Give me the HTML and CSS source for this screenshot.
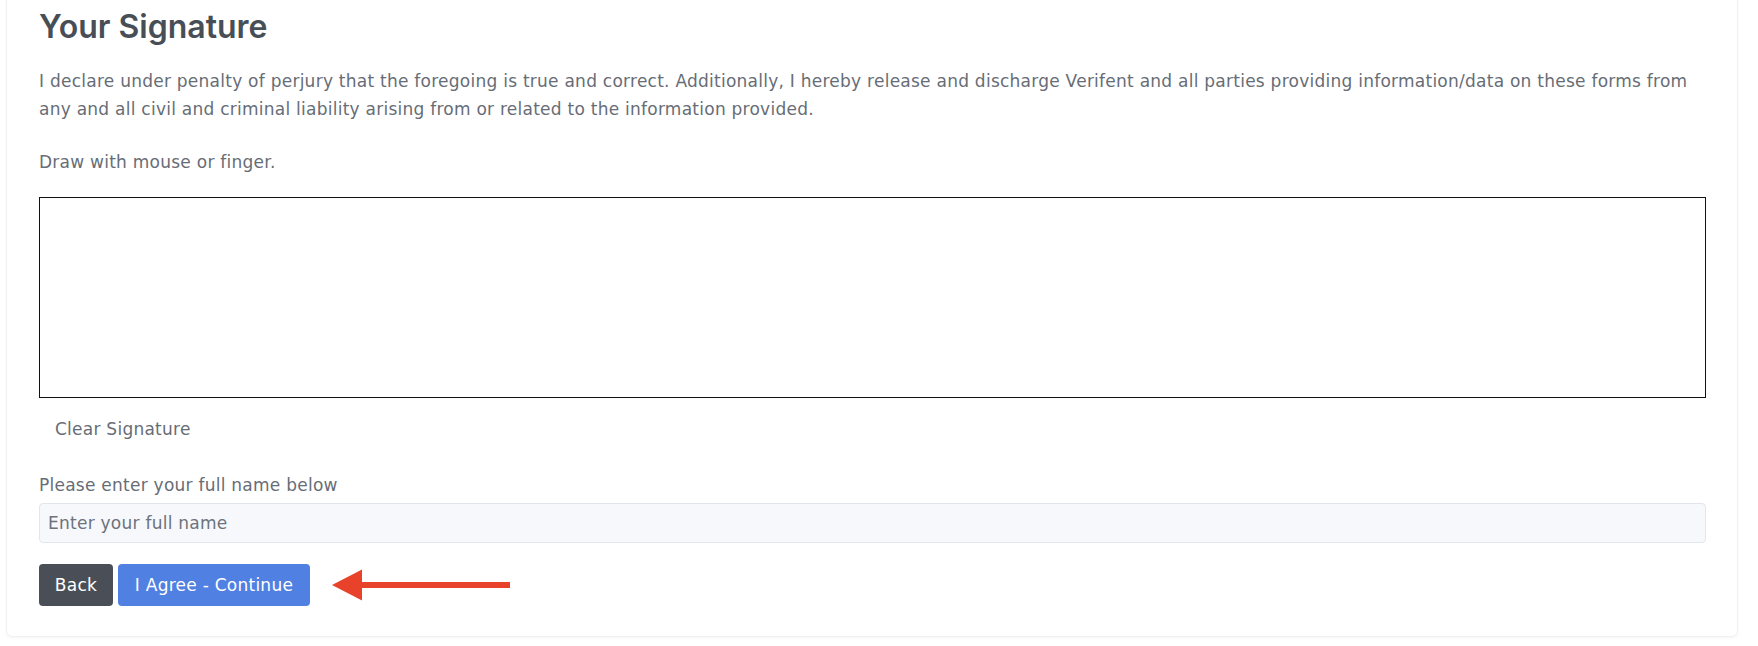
FILE: index.html
```html
<!DOCTYPE html>
<html lang="en">
<head>
<meta charset="utf-8">
<title>Your Signature</title>
<link rel="stylesheet" href="styles.css">
</head>
<body>
<div class="page">
  <section class="card">
    <h2 class="title">Your Signature</h2>
    <p class="text declare">I declare under penalty of perjury that the foregoing is true and correct. Additionally, I hereby release and discharge Verifent and all parties providing information/data on these forms from any and all civil and criminal liability arising from or related to the information provided.</p>
    <p class="text hint">Draw with mouse or finger.</p>
    <div class="sig-pad"></div>
    <button class="btn-link" type="button">Clear Signature</button>
    <label class="label" for="fullname">Please enter your full name below</label>
    <input class="input" id="fullname" type="text" placeholder="Enter your full name">
    <div class="actions">
      <button class="btn btn-dark" type="button">Back</button>
      <button class="btn btn-primary" type="button">I Agree - Continue</button>
      <svg class="arrow" width="180" height="32" viewBox="0 0 180 32" aria-hidden="true">
        <path d="M0 16 L30 0.5 L30 13 L178 13 L178 19 L30 19 L30 31.5 Z" fill="#e8432a"/>
      </svg>
    </div>
  </section>
</div>
</body>
</html>
```
FILE: styles.css
```css
* { box-sizing: border-box; }
html, body { margin: 0; padding: 0; background: #ffffff; }
body {
  font-family: "DejaVu Sans", "Open Sans", "Liberation Sans", sans-serif;
  color: #676d76;
  font-size: 17px;
  letter-spacing: 0.25px;
}
.page {
  padding: 0 20px 0 6px;
  overflow: hidden;
  height: 646px;
}
.card {
  margin-top: -25px;
  background: #fff;
  border: 1px solid #f0f1f3;
  border-radius: 6px;
  box-shadow: 0 1px 3px rgba(0, 0, 0, 0.04);
  padding: 31px 31px 30px 32px;
  display: flex;
  flex-direction: column;
  align-items: flex-start;
}
.title {
  margin: 0;
  font-family: Inter, "Open Sans", sans-serif;
  font-size: 32px;
  line-height: 40px;
  font-weight: 600;
  letter-spacing: 0;
  color: #484e56;
}
.text {
  margin: 0;
  line-height: 28px;
}
.declare { margin-top: 20px; }
.hint { margin-top: 25px; }
.sig-pad {
  margin-top: 21px;
  align-self: stretch;
  height: 201px;
  border: 1px solid #111;
  background: #fff;
}
.btn-link {
  margin-top: 13px;
  font: inherit;
  letter-spacing: inherit;
  color: #676d76;
  background: none;
  border: 0;
  padding: 6px 16px;
  line-height: 24px;
}
.label {
  margin-top: 26px;
  line-height: 24px;
}
.input {
  margin-top: 6px;
  align-self: stretch;
  height: 40px;
  font: inherit;
  letter-spacing: inherit;
  color: #676d76;
  background: #f6f8fc;
  border: 1px solid #e1e6ee;
  border-radius: 4px;
  padding: 0 8px;
}
.input::placeholder { color: #6d727b; }
.actions {
  margin-top: 21px;
  display: flex;
  align-items: center;
  gap: 5px;
}
.btn {
  font: inherit;
  letter-spacing: inherit;
  color: #fff;
  border: 0;
  border-radius: 4px;
  height: 42px;
  line-height: 24px;
  padding: 0 10px;
  white-space: nowrap;
}
.btn-dark { background: #4a4f57; width: 74px; }
.btn-primary { background: #5080e2; width: 192px; }
.arrow { margin-left: 17px; }
```
